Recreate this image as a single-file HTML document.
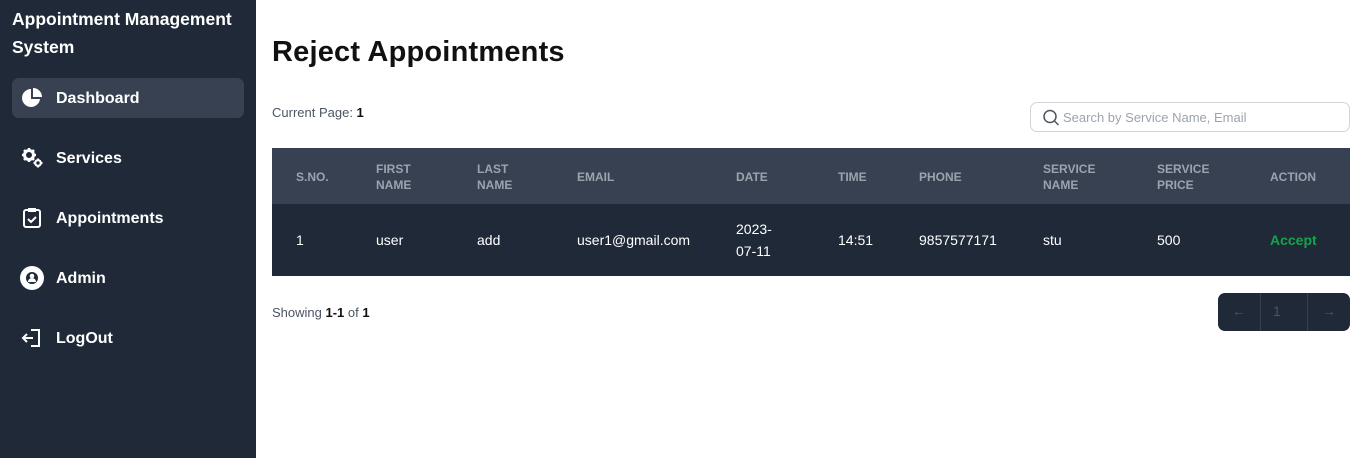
<!DOCTYPE html>
<html><head><meta charset="utf-8"><style>
*{margin:0;padding:0;box-sizing:border-box}
body{width:1366px;height:458px;overflow:hidden;font-family:"Liberation Sans",sans-serif;background:#fff;position:relative}
.sb{position:absolute;left:0;top:0;width:256px;height:458px;background:#1f2937;color:#fff}
.brand{position:absolute;left:12px;top:5px;font-size:17.5px;font-weight:bold;line-height:28px;width:240px}
.it{position:absolute;left:12px;width:232px;height:40px;border-radius:7px;font-size:16px;font-weight:bold}
.it svg{position:absolute;left:9px;top:9px}
.it span{position:absolute;left:44px;top:12px}
.act{background:#374151}
.abs{position:absolute}
h1{position:absolute;left:272px;top:36px;font-size:29px;font-weight:bold;color:#111;letter-spacing:0.2px}
.hd{position:absolute;left:272px;top:148px;width:1078px;height:56px;background:#374151}
.rw{position:absolute;left:272px;top:204px;width:1078px;height:72px;background:#1f2937}
.h{position:absolute;color:#9ca3af;font-size:12px;font-weight:bold;line-height:16px}
.c{position:absolute;color:#fff;font-size:14px;line-height:22px}
</style></head><body>
<div class="sb">
<div class="brand">Appointment Management System</div>
<div class="it act" style="top:78px"><svg width="22" height="22" viewBox="0 0 22 22"><path d="M10 2a9 9 0 1 0 9 10h-9z" fill="#fff"/><path d="M12 1v9h9a9 9 0 0 0-9-9z" fill="#fff"/></svg><span>Dashboard</span></div>
<div class="it" style="top:138px"><svg width="24" height="22" viewBox="0 0 24 22"><circle cx="8" cy="8" r="4.5" fill="none" stroke="#fff" stroke-width="3"/><path d="M8 1v3M8 12v3M1 8h3M12 8h3M3 3l2 2M11 11l2 2M13 3l-2 2M3 13l2-2" stroke="#fff" stroke-width="2.5"/><circle cx="17" cy="16" r="2.8" fill="none" stroke="#fff" stroke-width="2.2"/><path d="M17 11.5v2M17 18.5v2M12.5 16h2M19.5 16h2" stroke="#fff" stroke-width="2"/></svg><span>Services</span></div>
<div class="it" style="top:198px"><svg width="22" height="22" viewBox="0 0 22 22"><rect x="3" y="3" width="16" height="17" rx="2" fill="none" stroke="#fff" stroke-width="2"/><rect x="7" y="1" width="8" height="4" fill="#fff"/><path d="M7 12l3 3 5-5" fill="none" stroke="#fff" stroke-width="2"/></svg><span>Appointments</span></div>
<div class="it" style="top:258px"><svg width="24" height="24" viewBox="0 0 24 24" style="top:8px;left:8px"><circle cx="12" cy="12" r="12" fill="#fff"/><circle cx="12" cy="12" r="6" fill="#1f2937"/><circle cx="12" cy="10" r="2.3" fill="#fff"/><path d="M8 16a4 4 0 0 1 8 0z" fill="#fff"/></svg><span>Admin</span></div>
<div class="it" style="top:318px"><svg width="22" height="22" viewBox="0 0 22 22"><path d="M10 3h8v16h-8" fill="none" stroke="#fff" stroke-width="2"/><path d="M2 11h10M6 7l-4 4 4 4" fill="none" stroke="#fff" stroke-width="2"/></svg><span>LogOut</span></div>
</div>
<h1>Reject Appointments</h1>
<div class="abs" style="left:272px;top:105px;font-size:13px;color:#4b5563">Current Page: <b style="color:#111">1</b></div>
<div class="abs" style="left:1030px;top:102px;width:320px;height:30px;border:1px solid #d1d5db;border-radius:7px"><svg class="abs" style="left:11px;top:6px" width="18" height="18" viewBox="0 0 18 18"><circle cx="8" cy="7.5" r="6" fill="none" stroke="#4b5563" stroke-width="1.5"/><path d="M12.5 12l4 4" stroke="#4b5563" stroke-width="1.5"/></svg><span class="abs" style="left:32px;top:7px;font-size:13px;color:#9ca3af">Search by Service Name, Email</span></div>
<div class="hd"></div><div class="rw"></div>
<div class="h" style="left:296px;top:169px">S.NO.</div>
<div class="h" style="left:376px;top:161px">FIRST<br>NAME</div>
<div class="h" style="left:477px;top:161px">LAST<br>NAME</div>
<div class="h" style="left:577px;top:169px">EMAIL</div>
<div class="h" style="left:736px;top:169px">DATE</div>
<div class="h" style="left:838px;top:169px">TIME</div>
<div class="h" style="left:919px;top:169px">PHONE</div>
<div class="h" style="left:1043px;top:161px">SERVICE<br>NAME</div>
<div class="h" style="left:1157px;top:161px">SERVICE<br>PRICE</div>
<div class="h" style="left:1270px;top:169px">ACTION</div>
<div class="c" style="left:296px;top:229px">1</div>
<div class="c" style="left:376px;top:229px">user</div>
<div class="c" style="left:477px;top:229px">add</div>
<div class="c" style="left:577px;top:229px">user1@gmail.com</div>
<div class="c" style="left:736px;top:218px">2023-<br>07-11</div>
<div class="c" style="left:838px;top:229px">14:51</div>
<div class="c" style="left:919px;top:229px">9857577171</div>
<div class="c" style="left:1043px;top:229px">stu</div>
<div class="c" style="left:1157px;top:229px">500</div>
<div class="c" style="left:1270px;top:229px;color:#16a34a;font-weight:bold">Accept</div>
<div class="abs" style="left:272px;top:305px;font-size:13px;color:#4b5563">Showing <b style="color:#111">1-1</b> of <b style="color:#111">1</b></div>
<div class="abs" style="left:1218px;top:293px;width:132px;height:38px;background:#1f2937;border-radius:7px;color:#4b5563;font-size:14px">
<div class="abs" style="left:42px;top:0;width:1px;height:38px;background:#374151"></div>
<div class="abs" style="left:89px;top:0;width:1px;height:38px;background:#374151"></div>
<span class="abs" style="left:14px;top:10px">←</span><span class="abs" style="left:55px;top:10px">1</span><span class="abs" style="left:104px;top:10px">→</span>
</div>
</body></html>
